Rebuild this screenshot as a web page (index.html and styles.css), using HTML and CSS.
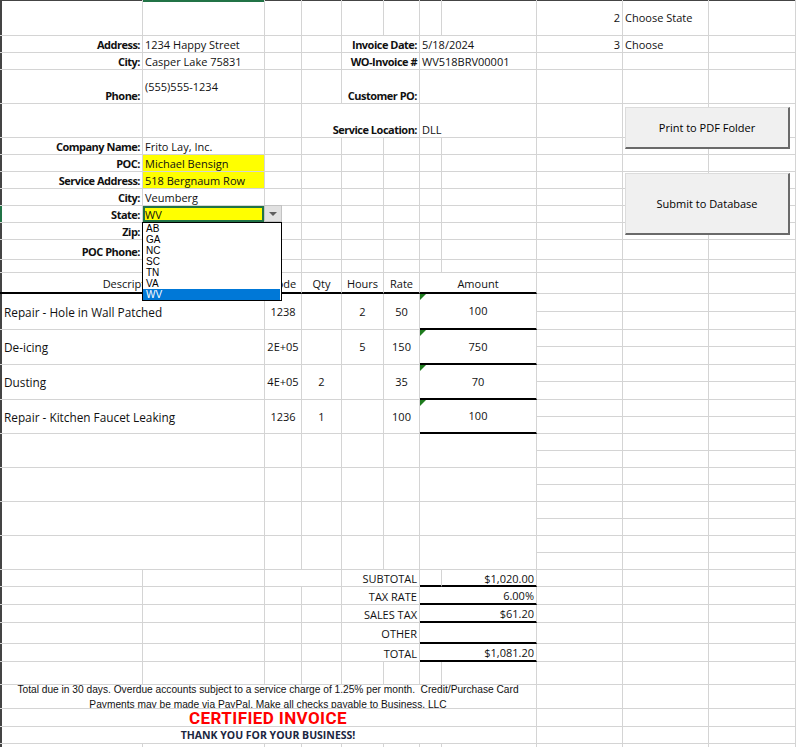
FILE: index.html
```html
<!DOCTYPE html>
<html lang="en">
<head>
<meta charset="utf-8">
<title>Invoice</title>
<link rel="stylesheet" href="styles.css">
</head>
<body>
<div class="wrap">
  <div class="sheet">
    <!-- row 1 -->
    <div></div><div class="selcol"></div><div></div><div></div><div></div><div></div><div></div><div></div><div class="R M">2</div><div class="M">Choose State</div><div></div>
    <!-- row 2 -->
    <div class="R B">Address:</div><div>1234 Happy Street</div><div></div><div></div><div class="s2 R B">Invoice Date:</div><div class="s2">5/18/2024</div><div class="R">3</div><div>Choose</div><div></div>
    <!-- row 3 -->
    <div class="R B">City:</div><div>Casper Lake 75831</div><div></div><div></div><div class="s2 R B">WO-Invoice #</div><div class="s2">WV518BRV00001</div><div></div><div></div><div></div>
    <!-- row 4 -->
    <div class="R B">Phone:</div><div class="M">(555)555-1234</div><div></div><div></div><div class="s2 R B">Customer PO:</div><div class="s2"></div><div></div><div></div><div></div>
    <!-- row 5 -->
    <div></div><div></div><div></div><div class="s3 R B">Service Location:</div><div class="s2">DLL</div><div></div><div></div><div></div>
    <!-- row 6 -->
    <div class="R B">Company Name:</div><div>Frito Lay, Inc.</div><div></div><div></div><div></div><div></div><div></div><div></div><div></div><div></div><div></div>
    <!-- row 7 -->
    <div class="R B">POC:</div><div class="y">Michael Bensign</div><div></div><div></div><div></div><div></div><div></div><div></div><div></div><div></div><div></div>
    <!-- row 8 -->
    <div class="R B">Service Address:</div><div class="y">518 Bergnaum Row</div><div></div><div></div><div></div><div></div><div></div><div></div><div></div><div></div><div></div>
    <!-- row 9 -->
    <div class="R B">City:</div><div>Veumberg</div><div></div><div></div><div></div><div></div><div></div><div></div><div></div><div></div><div></div>
    <!-- row 10 -->
    <div class="R B selrow">State:</div><div class="y act">WV</div><div></div><div></div><div></div><div></div><div></div><div></div><div></div><div></div><div></div>
    <!-- row 11 -->
    <div class="R B">Zip:</div><div></div><div></div><div></div><div></div><div></div><div></div><div></div><div></div><div></div><div></div>
    <!-- row 12 -->
    <div class="R B">POC Phone:</div><div></div><div></div><div></div><div></div><div></div><div></div><div></div><div></div><div></div><div></div>
    <!-- row 13 -->
    <div></div><div></div><div></div><div></div><div></div><div></div><div></div><div></div><div></div><div></div><div></div>
    <!-- row 14 header -->
    <div class="s2 C hd">Description</div><div class="C hd">Code</div><div class="C hd">Qty</div><div class="C hd">Hours</div><div class="C hd">Rate</div><div class="s2 C hd">Amount</div><div></div><div></div><div></div>
    <!-- item 1 -->
    <div class="s2 r2 M desc">Repair - Hole in Wall Patched</div><div class="r2 C M">1238</div><div class="r2 C M"></div><div class="r2 C M">2</div><div class="r2 C M">50</div><div class="s2 r2 C M amt">100</div><div></div><div></div><div></div>
    <div></div><div></div><div></div>
    <!-- item 2 -->
    <div class="s2 r2 M desc">De-icing</div><div class="r2 C M">2E+05</div><div class="r2 C M"></div><div class="r2 C M">5</div><div class="r2 C M">150</div><div class="s2 r2 C M amt">750</div><div></div><div></div><div></div>
    <div></div><div></div><div></div>
    <!-- item 3 -->
    <div class="s2 r2 M desc">Dusting</div><div class="r2 C M">4E+05</div><div class="r2 C M">2</div><div class="r2 C M"></div><div class="r2 C M">35</div><div class="s2 r2 C M amt">70</div><div></div><div></div><div></div>
    <div></div><div></div><div></div>
    <!-- item 4 -->
    <div class="s2 r2 M desc">Repair - Kitchen Faucet Leaking</div><div class="r2 C M">1236</div><div class="r2 C M">1</div><div class="r2 C M"></div><div class="r2 C M">100</div><div class="s2 r2 C M amt">100</div><div></div><div></div><div></div>
    <div></div><div></div><div></div>
    <!-- empty items -->
    <div class="s2 r2"></div><div class="r2"></div><div class="r2"></div><div class="r2"></div><div class="r2"></div><div class="s2 r2"></div><div></div><div></div><div></div>
    <div></div><div></div><div></div>
    <div class="s2 r2"></div><div class="r2"></div><div class="r2"></div><div class="r2"></div><div class="r2"></div><div class="s2 r2"></div><div></div><div></div><div></div>
    <div></div><div></div><div></div>
    <div class="s2 r2"></div><div class="r2"></div><div class="r2"></div><div class="r2"></div><div class="r2"></div><div class="s2 r2"></div><div></div><div></div><div></div>
    <div></div><div></div><div></div>
    <div class="s2 r2"></div><div class="r2"></div><div class="r2"></div><div class="r2"></div><div class="r2"></div><div class="s2 r2"></div><div></div><div></div><div></div>
    <div></div><div></div><div></div>
    <!-- totals -->
    <div></div><div></div><div class="s2"></div><div class="s2 R M tl">SUBTOTAL</div><div class="tot"></div><div class="R M tl tot">$1,020.00</div><div></div><div></div><div></div>
    <div></div><div></div><div></div><div></div><div class="s2 R M tl">TAX RATE</div><div class="s2 R M tl tot">6.00%</div><div></div><div></div><div></div>
    <div></div><div></div><div></div><div></div><div class="s2 R M tl">SALES TAX</div><div class="s2 R M tl tot">$61.20</div><div></div><div></div><div></div>
    <div></div><div></div><div></div><div></div><div class="s2 R M tl">OTHER</div><div class="s2 R M tl tot"></div><div></div><div></div><div></div>
    <div></div><div></div><div></div><div></div><div class="s2 R M tl">TOTAL</div><div class="s2 R M tl tot">$1,081.20</div><div></div><div></div><div></div>
    <!-- blank -->
    <div></div><div></div><div></div><div></div><div></div><div></div><div></div><div></div><div></div><div></div><div></div>
    <!-- footer -->
    <div class="s8 foot"><p class="foot-text">Total due in 30 days. Overdue accounts subject to a service charge of 1.25% per month.&nbsp; Credit/Purchase Card<br>Payments may be made via PayPal. Make all checks payable to Business, LLC</p></div><div></div><div></div><div></div>
    <div class="s8 cert">CERTIFIED INVOICE</div><div></div><div></div><div></div>
    <div class="s8 thanks">THANK YOU FOR YOUR BUSINESS!</div><div></div><div></div><div></div>
    <div></div><div></div><div></div><div></div><div></div><div></div><div></div><div></div><div></div><div></div><div></div>
  </div>

  <button class="btn btn-pdf" type="button">Print to PDF Folder</button>
  <button class="btn btn-db" type="button">Submit to Database</button>

  <div class="dd-arrow"></div>
  <ul class="dd-list">
    <li>AB</li>
    <li>GA</li>
    <li>NC</li>
    <li>SC</li>
    <li>TN</li>
    <li>VA</li>
    <li class="on">WV</li>
  </ul>
</div>
</body>
</html>
```

FILE: styles.css
```css
html, body {
  margin: 0;
  padding: 0;
  background: #fff;
}
body {
  font-family: "Open Sans", "Noto Sans", sans-serif;
  font-size: 11px;
  color: #111;
}
.wrap {
  position: relative;
  width: 796px;
  height: 747px;
  overflow: hidden;
}
.sheet {
  display: grid;
  grid-template-columns: 143px 122px 37px 40px 42px 36px 22px 95px 86px 86px 87px;
  grid-template-rows:
    36px 17px 17px 34px 34px
    17px 17px 17px 17px 17px 17px
    20px 13px 21px
    18px 18px 17px 18px 17px 18px 17px 17px
    17px 17px 17px 17px 17px 17px 17px 17px
    17px 18px 18px 21px 18px
    23px 24px 18px 17px 17px;
  box-shadow: inset 2px 1px 0 #444;
}
.sheet > div {
  position: relative;
  display: flex;
  align-items: flex-end;
  min-width: 0;
  padding: 0 2px;
  border-right: 1px solid #d4d4d4;
  border-bottom: 1px solid #d4d4d4;
  white-space: nowrap;
  overflow: hidden;
  line-height: 14px;
}
.s2 { grid-column: span 2; }
.s3 { grid-column: span 3; }
.s8 { grid-column: span 8; }
.r2 { grid-row: span 2; }
.sheet > .R { justify-content: flex-end; }
.sheet > .C { justify-content: center; }
.sheet > .M { align-items: center; }
.B {
  font-weight: 700;
  letter-spacing: -0.5px;
}
.y { background: #ffff00; }
.selcol { box-shadow: inset 0 2px 0 #217346; }
.selrow { box-shadow: inset 2px 0 0 #217346; }
.act { box-shadow: inset 0 0 0 2px #217346; }
.sheet > .hd {
  border-bottom: 2px solid #000;
  padding-bottom: 1px;
}
.sheet > .desc {
  padding-left: 4px;
  font-size: 11.8px;
}
.sheet > .amt { border-bottom: 2px solid #000; }
.amt::before {
  content: "";
  position: absolute;
  left: 0;
  top: 0;
  border-top: 6px solid #1e7b1e;
  border-right: 6px solid transparent;
}
.sheet > .tl { padding-top: 2px; }
.sheet > .tot { border-bottom: 2px solid #000; }

.sheet > .foot {
  align-items: flex-start;
  justify-content: center;
  padding: 0;
}
.foot-text {
  margin: -3px 0 0;
  flex: none;
  text-align: center;
  font-family: "Liberation Sans", Arial, sans-serif;
  font-size: 10.2px;
  line-height: 15px;
}
.sheet > .cert {
  justify-content: center;
  align-items: center;
  padding: 0;
  overflow: visible;
  font-family: Roboto, "Open Sans", sans-serif;
  font-weight: 700;
  font-size: 17px;
  letter-spacing: 0.4px;
  line-height: 16px;
  color: #ff0000;
}
.sheet > .thanks {
  justify-content: center;
  align-items: center;
  padding: 0;
  font-weight: 700;
  font-size: 10.5px;
  color: #1b2640;
}

.btn {
  position: absolute;
  left: 625px;
  width: 165px;
  box-sizing: border-box;
  margin: 0;
  padding: 0;
  background: #f0f0f0;
  border: 1px solid #dcdcdc;
  border-right: 2px solid #6a6a6a;
  border-bottom: 2px solid #6a6a6a;
  font-family: "Open Sans", "Noto Sans", sans-serif;
  font-size: 11px;
  color: #000;
}
.btn-pdf { top: 107px; height: 42px; }
.btn-db { top: 173px; height: 62px; }

.dd-arrow {
  position: absolute;
  left: 264px;
  top: 205px;
  width: 18px;
  height: 17px;
  box-sizing: border-box;
  background: #e1e1e1;
  border: 1px solid #c3c3c3;
}
.dd-arrow::after {
  content: "";
  position: absolute;
  left: 4px;
  top: 6px;
  border-left: 4px solid transparent;
  border-right: 4px solid transparent;
  border-top: 4px solid #5e5e5e;
}
.dd-list {
  position: absolute;
  left: 142px;
  top: 222px;
  width: 140px;
  height: 79px;
  box-sizing: border-box;
  margin: 0;
  padding: 0 1px 0 0;
  list-style: none;
  background: #fff;
  border: 1px solid #000;
  font-family: "Liberation Sans", Arial, sans-serif;
  font-size: 10px;
  line-height: 11px;
  color: #000;
}
.dd-list li {
  padding-left: 3px;
  height: 11px;
}
.dd-list .on {
  background: #0078d7;
  color: #fff;
}
```
